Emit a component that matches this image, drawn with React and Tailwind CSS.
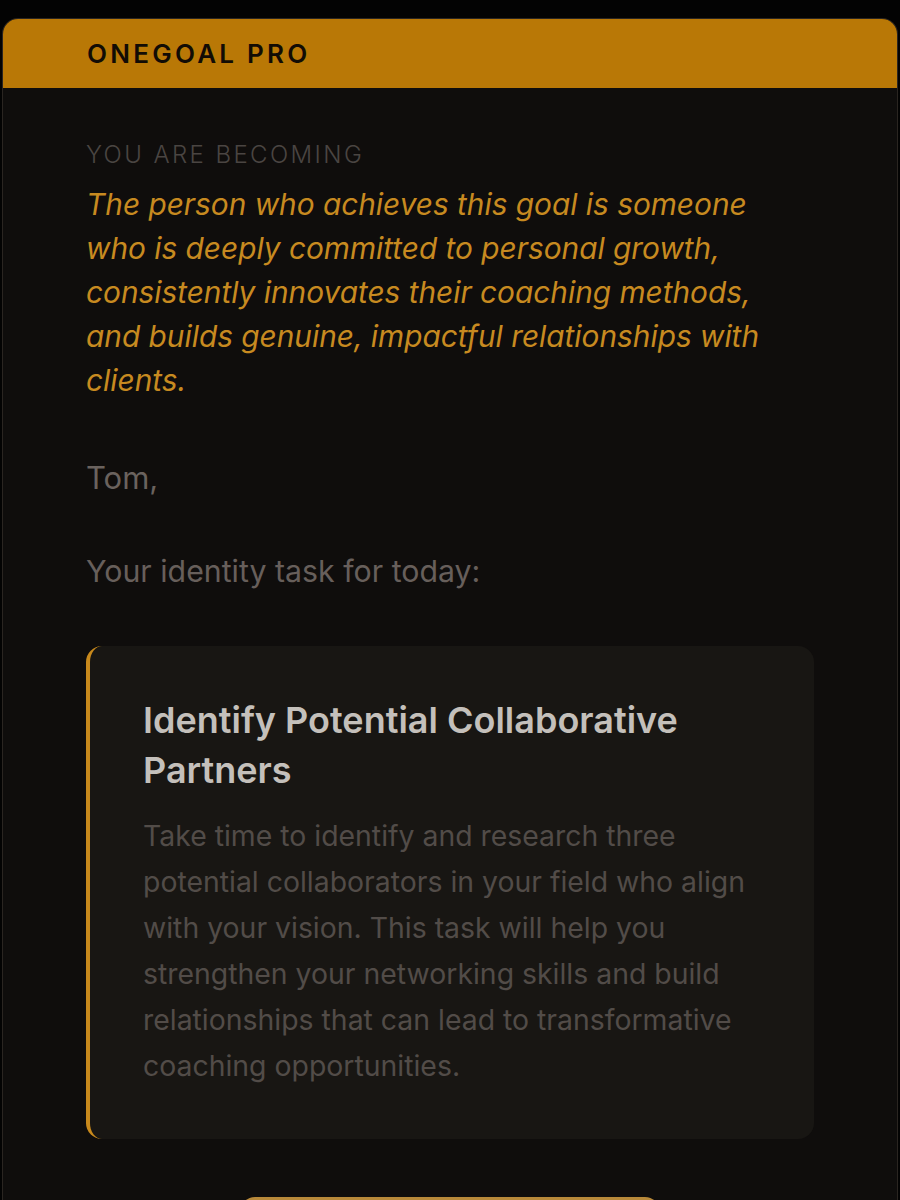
import React from "react";

export default function App() {
  return (
    <div
      className="min-h-[1200px] w-[900px] bg-[#030303] pt-[18px]"
      style={{ fontFamily: "Inter, 'Noto Sans', sans-serif" }}
    >
      <div className="mx-[2px] rounded-t-[16px] border border-b-0 border-[#2a2521] bg-[#0f0d0c] overflow-hidden">
        <div className="h-[69px] bg-[#b97806] flex items-center pl-[84px]">
          <span className="text-[26px] font-semibold tracking-[0.125em] text-[#120c05]">
            ONEGOAL PRO
          </span>
        </div>
        <div className="px-[83px] pt-[53px] pb-[40px]">
          <div className="text-[24px] leading-[28px] tracking-[0.1em] text-[#4a4542] font-light">
            YOU ARE BECOMING
          </div>
          <p className="mt-[13px] pr-[20px] text-[29.8px] leading-[44px] italic text-[#c78a20]">
            The person who achieves this goal is someone who is deeply committed to personal growth, consistently innovates their coaching methods, and builds genuine, impactful relationships with clients.
          </p>
          <p className="mt-[54px] text-[31px] leading-[44px] text-[#6a625e]">Tom,</p>
          <p className="mt-[49px] text-[30.3px] leading-[44px] text-[#675f5b]">
            Your identity task for today:
          </p>
          <div className="mt-[53px] rounded-[16px] border-l-[4px] border-[#c8891c] bg-[#181613] pl-[53px] pr-[50px] pt-[49px] pb-[50px]">
            <h2 className="text-[36px] leading-[50px] font-semibold text-[#c4c0bb]">
              Identify Potential Collaborative Partners
            </h2>
            <p className="mt-[18px] text-[28.4px] leading-[46px] text-[#524c48]">
              Take time to identify and research three potential collaborators in your field who align with your vision. This task will help you strengthen your networking skills and build relationships that can lead to transformative coaching opportunities.
            </p>
          </div>
          <div className="mt-[58px] flex justify-center">
            <button
              aria-label="Complete task"
              className="w-[418px] h-[64px] rounded-[14px] bg-[#b8893a]"
            />
          </div>
        </div>
      </div>
    </div>
  );
}
